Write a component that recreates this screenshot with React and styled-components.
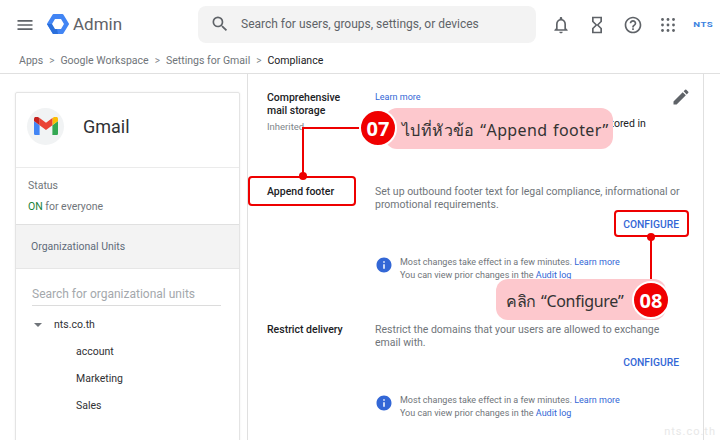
import React from 'react';
import styled, { createGlobalStyle } from 'styled-components';
import { MdMenu, MdSearch, MdOutlineNotifications, MdHourglassEmpty, MdHelpOutline, MdEdit, MdInfo } from 'react-icons/md';

const GlobalStyle = createGlobalStyle`
  html, body {
    margin: 0;
    height: 100%;
    overflow: hidden;
    background: #fff;
  }
  body {
    font-family: Roboto, "Liberation Sans", sans-serif;
    color: #202124;
  }
`;

const Page = styled.div`
  position: relative;
  width: 720px;
  height: 440px;
  overflow: hidden;
`;

const Header = styled.header`
  display: flex;
  align-items: center;
  height: 49px;
`;

const MenuButton = styled.div`
  display: flex;
  color: #5f6368;
  margin-left: 15px;
  width: 32px;
`;

const Logo = styled.div`
  display: flex;
  align-items: center;
  gap: 4px;
  width: 151px;
  font-size: 17px;
  color: #5f6368;
  padding-bottom: 1px;
`;

const SearchBar = styled.div`
  display: flex;
  align-items: center;
  width: 338px;
  height: 37px;
  margin-bottom: 1px;
  border-radius: 8px;
  background: #f3f3f3;
  color: #5f6368;
  font-size: 12px;
  padding-left: 12px;
  gap: 11px;
  box-sizing: border-box;
`;

const HeaderIcons = styled.div`
  display: flex;
  align-items: center;
  margin-left: 7px;
`;

const IconSlot = styled.div`
  display: flex;
  justify-content: center;
  width: 36px;
  color: #5f6368;
`;

const AppsSlot = styled(IconSlot)`
  width: 34px;
`;

const NtsMark = styled.div`
  font-size: 8px;
  font-weight: 700;
  letter-spacing: 0.4px;
  color: #3b82e0;
  transform: scaleX(1.2);
  margin-left: 10px;
`;

const Breadcrumb = styled.nav`
  display: flex;
  align-items: center;
  height: 22px;
  padding-left: 19px;
  padding-bottom: 2px;
  font-size: 10.55px;
  color: #70757a;
  border-bottom: 1px solid #e0e0e0;
`;

const CrumbSep = styled.span`
  margin: 0 6px;
  font-size: 10px;
  color: #80868b;
`;

const CrumbCurrent = styled.span`
  color: #202124;
`;

const Body = styled.div`
  display: flex;
  height: 366px;
`;

const Sidebar = styled.aside`
  width: 248px;
  box-sizing: border-box;
  padding: 18px 7px 0 15px;
  border-right: 1px solid #e0e0e0;
  flex: none;
`;

const Card = styled.div`
  height: 400px;
  border: 1px solid #e4e4e4;
  border-radius: 2px;
  box-shadow: 0 0 2px rgba(0, 0, 0, 0.08);
`;

const CardTitle = styled.div`
  display: flex;
  align-items: center;
  height: 66px;
  padding: 0 0 8px 11px;
  gap: 19px;
  font-size: 18px;
  color: #303134;
  border-bottom: 1px solid #ebebeb;
`;

const Avatar = styled.div`
  display: flex;
  align-items: center;
  justify-content: center;
  width: 37px;
  height: 37px;
  border-radius: 50%;
  background: #f1f3f4;
`;

const StatusBlock = styled.div`
  display: flex;
  flex-direction: column;
  justify-content: center;
  gap: 8px;
  height: 56px;
  padding-left: 12px;
  font-size: 10.5px;
  color: #70757a;
  border-bottom: 1px solid #e0e0e0;
`;

const OnLabel = styled.span`
  color: #188038;
`;

const UnitsTitle = styled.div`
  display: flex;
  align-items: center;
  height: 43px;
  padding-left: 15px;
  font-size: 10.5px;
  color: #5f6b7a;
  background: #f3f3f3;
  border-bottom: 1px solid #e6e6e6;
`;

const UnitsSearch = styled.div`
  margin: 17px 18px 0 16px;
  height: 19px;
  font-size: 12px;
  line-height: 17px;
  color: #a4a8ac;
  border-bottom: 1px solid #dcdcdc;
`;

const TreeRoot = styled.div`
  display: flex;
  align-items: center;
  height: 27px;
  margin-top: 5px;
  padding-left: 18px;
  font-size: 10.5px;
  color: #303134;
`;

const TreeArrow = styled.span`
  width: 0;
  height: 0;
  border-left: 4px solid transparent;
  border-right: 4px solid transparent;
  border-top: 4px solid #70757a;
  margin-right: 12px;
`;

const TreeItem = styled.div`
  display: flex;
  align-items: center;
  height: 27px;
  padding-left: 60px;
  font-size: 10.5px;
  color: #303134;
`;

const Main = styled.main`
  position: relative;
  width: 456px;
  box-sizing: border-box;
  padding: 17px 24px 0 19px;
  border-right: 1px solid #e0e0e0;
  flex: none;
`;

const Row = styled.section`
  display: grid;
  grid-template-columns: 108px 1fr;
  height: ${p => p.$height}px;
`;

const RowLabel = styled.div`
  font-size: 10.5px;
  font-weight: 500;
  line-height: 13px;
  color: #202124;
`;

const Inherited = styled.div`
  margin-top: 4px;
  font-size: 9.5px;
  color: #80868b;
`;

const Link = styled.a`
  color: #3367d6;
  text-decoration: none;
`;

const LearnMore = styled(Link)`
  display: block;
  font-size: 9px;
  line-height: 13px;
`;

const StorageText = styled.div`
  margin-top: 13px;
  font-size: 10.5px;
  line-height: 13px;
  white-space: nowrap;
  color: #202124;
`;

const Description = styled.div`
  margin-right: -4px;
  font-size: 10.5px;
  line-height: 13px;
  color: #70757a;
`;

const ActionRow = styled.div`
  display: flex;
  justify-content: flex-end;
  margin-top: 7px;
`;

const ConfigureLink = styled(Link)`
  font-size: 10.3px;
  font-weight: 500;
  line-height: 14px;
`;

const Notice = styled.div`
  display: flex;
  align-items: flex-start;
  gap: 7px;
  margin-top: 24px;
  font-size: 9px;
  line-height: 12.5px;
  color: #70757a;
  svg {
    color: #3367d6;
  }
`;

const EditButton = styled.div`
  position: absolute;
  top: 13px;
  right: 12px;
  display: flex;
  color: #5f6368;
`;

const RedBox = styled.div`
  position: absolute;
  left: ${p => p.$x}px;
  top: ${p => p.$y}px;
  width: ${p => p.$w}px;
  height: ${p => p.$h}px;
  box-sizing: border-box;
  border: 2px solid #ee0000;
  border-radius: 4px;
`;

const Dot = styled.div`
  position: absolute;
  left: ${p => p.$x - 4}px;
  top: ${p => p.$y - 4}px;
  width: 8px;
  height: 8px;
  border-radius: 50%;
  background: #ee0000;
`;

const Wire = styled.div`
  position: absolute;
  left: ${p => p.$x}px;
  top: ${p => p.$y}px;
  width: ${p => p.$w}px;
  height: ${p => p.$h}px;
  background: #ee0000;
`;

const Callout = styled.div`
  position: absolute;
  left: ${p => p.$x}px;
  top: ${p => p.$y}px;
  width: ${p => p.$w}px;
  height: 41px;
  box-sizing: border-box;
  display: flex;
  align-items: center;
  padding: 3px 0 0 ${p => p.$pad}px;
  border-radius: 12px;
  background: #fdc8cd;
  font-family: "Noto Sans", "Open Sans", sans-serif;
  font-size: 16px;
  letter-spacing: ${p => p.$spacing}px;
  word-spacing: 1px;
  white-space: nowrap;
  color: #333;
`;

const StepBadge = styled.div`
  position: absolute;
  left: ${p => p.$x - 19}px;
  top: ${p => p.$y - 19}px;
  width: 38px;
  height: 38px;
  box-sizing: border-box;
  display: flex;
  align-items: center;
  justify-content: center;
  border: 2px solid #fff;
  border-radius: 50%;
  background: #f00000;
  color: #fff;
  font-family: "Open Sans", sans-serif;
  font-size: 20px;
  font-weight: 700;
`;

const Watermark = styled.div`
  position: absolute;
  right: 4px;
  bottom: 2px;
  font-size: 11px;
  letter-spacing: 1px;
  color: #e8e8e8;
`;

const AdminLogo = () => (
  <svg width="22" height="20" viewBox="0 0 22 20">
    <path d="M6.5 1h9l5.5 9-5.5 9h-9L1 10z" fill="#4285f4" stroke="#4285f4" strokeWidth="2" strokeLinejoin="round" />
    <path d="M0 10l6 10h5l-1-5-3-5z" fill="#2a6fdb" />
    <path d="M8 5h6l3 5-3 5H8l-3-5z" fill="#fff" />
  </svg>
);

const GmailLogo = () => (
  <svg width="24" height="18" viewBox="0 0 24 18">
    <path d="M1.6 18h4V8.3L0 4.1V16.4c0 .9.7 1.6 1.6 1.6z" fill="#4285f4" />
    <path d="M18.4 18h4c.9 0 1.6-.7 1.6-1.6V4.1l-5.6 4.2z" fill="#34a853" />
    <path d="M18.4 1v7.3L24 4.1V2c0-2-2.3-3.1-3.8-1.9z" fill="#fbbc04" />
    <path d="M5.6 8.3V1L12 5.8 18.4 1v7.3L12 13.1z" fill="#ea4335" />
    <path d="M0 2v2.1l5.6 4.2V1L3.8.1C2.3-1.1 0 0 0 2z" fill="#c5221f" />
  </svg>
);

const AppsGrid = () => (
  <svg width="14" height="14" viewBox="0 0 14 14" fill="#5f6368">
    {[1.5, 7, 12.5].map(y =>
      [1.5, 7, 12.5].map(x => <circle key={`${x}-${y}`} cx={x} cy={y} r="1.4" />)
    )}
  </svg>
);

export default function App() {
  return (
    <Page>
      <GlobalStyle />
      <Header>
        <MenuButton><MdMenu size={20} /></MenuButton>
        <Logo><AdminLogo />Admin</Logo>
        <SearchBar><MdSearch size={20} />Search for users, groups, settings, or devices</SearchBar>
        <HeaderIcons>
          <IconSlot><MdOutlineNotifications size={20} /></IconSlot>
          <IconSlot><MdHourglassEmpty size={20} /></IconSlot>
          <IconSlot><MdHelpOutline size={20} /></IconSlot>
          <AppsSlot><AppsGrid /></AppsSlot>
          <NtsMark>NTS</NtsMark>
        </HeaderIcons>
      </Header>
      <Breadcrumb>
        Apps<CrumbSep>&gt;</CrumbSep>Google Workspace<CrumbSep>&gt;</CrumbSep>Settings for Gmail<CrumbSep>&gt;</CrumbSep>
        <CrumbCurrent>Compliance</CrumbCurrent>
      </Breadcrumb>
      <Body>
        <Sidebar>
          <Card>
            <CardTitle><Avatar><GmailLogo /></Avatar>Gmail</CardTitle>
            <StatusBlock>
              <div>Status</div>
              <div><OnLabel>ON</OnLabel> for everyone</div>
            </StatusBlock>
            <UnitsTitle>Organizational Units</UnitsTitle>
            <UnitsSearch>Search for organizational units</UnitsSearch>
            <TreeRoot><TreeArrow />nts.co.th</TreeRoot>
            <TreeItem>account</TreeItem>
            <TreeItem>Marketing</TreeItem>
            <TreeItem>Sales</TreeItem>
          </Card>
        </Sidebar>
        <Main>
          <EditButton><MdEdit size={20} /></EditButton>
          <Row $height={94}>
            <div>
              <RowLabel>Comprehensive<br />mail storage</RowLabel>
              <Inherited>Inherited</Inherited>
            </div>
            <div>
              <LearnMore href="#">Learn more</LearnMore>
              <StorageText>Ensures a copy of all sent and all received mail is stored in</StorageText>
            </div>
          </Row>
          <Row $height={138}>
            <RowLabel>Append footer</RowLabel>
            <div>
              <Description>Set up outbound footer text for legal compliance, informational or promotional requirements.</Description>
              <ActionRow><ConfigureLink href="#">CONFIGURE</ConfigureLink></ActionRow>
              <Notice>
                <MdInfo size={18} />
                <div>
                  Most changes take effect in a few minutes. <Link href="#">Learn more</Link><br />
                  You can view prior changes in the <Link href="#">Audit log</Link>
                </div>
              </Notice>
            </div>
          </Row>
          <Row $height={110}>
            <RowLabel>Restrict delivery</RowLabel>
            <div>
              <Description>Restrict the domains that your users are allowed to exchange email with.</Description>
              <ActionRow><ConfigureLink href="#">CONFIGURE</ConfigureLink></ActionRow>
              <Notice>
                <MdInfo size={18} />
                <div>
                  Most changes take effect in a few minutes. <Link href="#">Learn more</Link><br />
                  You can view prior changes in the <Link href="#">Audit log</Link>
                </div>
              </Notice>
            </div>
          </Row>
        </Main>
      </Body>

      <RedBox $x={248} $y={176} $w={108} $h={30} />
      <RedBox $x={614} $y={210} $w={75} $h={27} />
      <Wire $x={302} $y={127} $w={2} $h={50} />
      <Wire $x={302} $y={127} $w={62} $h={2} />
      <Wire $x={650} $y={237} $w={2} $h={46} />
      <Dot $x={303} $y={176} />
      <Dot $x={651} $y={237} />
      <Callout $x={385} $y={108} $w={228} $pad={17} $spacing={0.4}>ไปที่หัวข้อ “Append footer”</Callout>
      <Callout $x={496} $y={279} $w={170} $pad={10} $spacing={-0.3}>คลิก “Configure”</Callout>
      <StepBadge $x={378} $y={128}>07</StepBadge>
      <StepBadge $x={651} $y={300}>08</StepBadge>
      <Watermark>nts.co.th</Watermark>
    </Page>
  );
}
